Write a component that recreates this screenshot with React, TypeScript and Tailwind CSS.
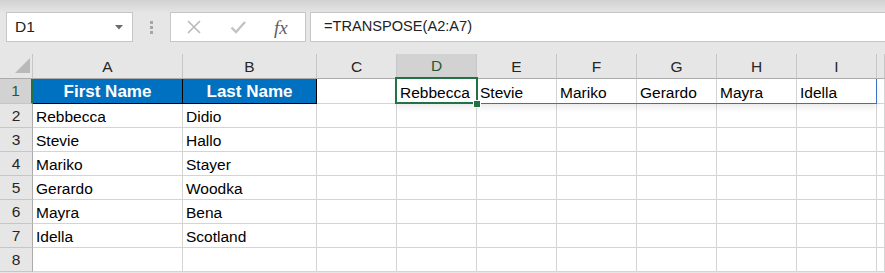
import React from "react";

const COLS = ["A", "B", "C", "D", "E", "F", "G", "H", "I", ""];

const ROWS: string[][] = [
	["First Name", "Last Name", "", "Rebbecca", "Stevie", "Mariko", "Gerardo", "Mayra", "Idella", ""],
	["Rebbecca", "Didio"],
	["Stevie", "Hallo"],
	["Mariko", "Stayer"],
	["Gerardo", "Woodka"],
	["Mayra", "Bena"],
	["Idella", "Scotland"],
	[],
];

const gridCols = "grid grid-cols-[33px_150px_134px_80px_80px_80px_80px_80px_80px_80px_1fr]";

const ColumnHeaders = () => (
	<div className={`${gridCols} h-[25px]`}>
		{/* corner with the select-all triangle */}
		<div className="relative border-r border-b border-r-[#c6c6c6] border-b-[#ababab] bg-[#e6e6e6]">
			<svg className="absolute left-[15px] top-[4px]" width="15" height="15" viewBox="0 0 15 15" aria-hidden="true">
				<polygon points="15,0 15,15 0,15" fill="#b9b9b9" />
			</svg>
		</div>
		{COLS.map((c, i) => {
			const selected = c === "D";
			return (
				<div
					key={i}
					className={
						selected
							? "flex items-center justify-center border-r border-r-[#c6c6c6] border-b-2 border-b-[#217346] bg-[#d2d2d2] text-[15.5px] text-[#1e5a36]"
							: "flex items-center justify-center border-r border-b border-r-[#c6c6c6] border-b-[#ababab] bg-[#e6e6e6] text-[15.5px] text-[#262626]"
					}
				>
					{c}
				</div>
			);
		})}
	</div>
);

const Row = ({ index, values }: { index: number; values: string[] }) => {
	const isHeaderRow = index === 1;
	return (
		<div className={`${gridCols} ${isHeaderRow ? "h-[25px]" : "h-[24px]"}`}>
			<div
				className={
					isHeaderRow
						? "flex items-center justify-center border-b border-b-[#c6c6c6] border-r-2 border-r-[#217346] bg-[#d2d2d2] text-[15.5px] text-[#1e5a36]"
						: "flex items-center justify-center border-b border-r border-b-[#c6c6c6] border-r-[#ababab] bg-[#e6e6e6] text-[15.5px] text-[#262626]"
				}
			>
				{index}
			</div>
			{COLS.map((_, ci) => {
				const v = values[ci] ?? "";
				if (isHeaderRow && ci < 2) {
					return (
						<div
							key={ci}
							className="flex items-end justify-center border-r border-b border-black bg-[#0070c0] pb-[1px] text-[17px] font-bold leading-[21px] text-white"
						>
							{v}
						</div>
					);
				}
				return (
					<div
						key={ci}
						className="flex items-end overflow-visible whitespace-nowrap border-r border-b border-[#d4d4d4] bg-white pl-[3px] text-[15.5px] leading-[20px] text-black"
					>
						{v}
					</div>
				);
			})}
		</div>
	);
};

const FormulaToolbar = () => (
	<div className="flex h-[30px] items-stretch">
		{/* name box */}
		<div className="ml-[6px] flex w-[127px] items-center justify-between border border-[#c6c6c6] bg-white pl-[8px] pr-[9px]">
			<span className="text-[15.5px] text-[#222]">D1</span>
			<svg width="8" height="5" viewBox="0 0 8 5" aria-hidden="true">
				<polygon points="0,0 8,0 4,4.5" fill="#6b6b6b" />
			</svg>
		</div>

		{/* grip dots */}
		<div className="flex w-[37px] flex-col items-center justify-center gap-[2px]">
			<span className="h-[3px] w-[3px] bg-[#a6a6a6]" />
			<span className="h-[3px] w-[3px] bg-[#a6a6a6]" />
			<span className="h-[3px] w-[3px] bg-[#a6a6a6]" />
		</div>

		{/* cancel / enter / fx */}
		<div className="flex w-[136px] items-center border border-[#c6c6c6] bg-white">
			<svg className="ml-[15px]" width="16" height="16" viewBox="0 0 16 16" aria-hidden="true">
				<path d="M2 2 L14 14 M14 2 L2 14" stroke="#b9b9b9" strokeWidth="1.6" fill="none" />
			</svg>
			<svg className="ml-[28px]" width="16" height="16" viewBox="0 0 16 16" aria-hidden="true">
				<path d="M1.5 8.5 L6 13 L15 3" stroke="#c2c2c2" strokeWidth="2.4" fill="none" />
			</svg>
			<span className="ml-[28px] font-['Liberation_Serif',serif] text-[19px] italic leading-none text-[#5e5e5e]">
				fx
			</span>
		</div>

		{/* formula bar */}
		<div className="ml-[4px] flex flex-1 items-center border-y border-l border-[#c6c6c6] bg-white pl-[13px]">
			<span className="text-[14.6px] text-[#222]">=TRANSPOSE(A2:A7)</span>
		</div>
	</div>
);

export default function App() {
	return (
		<div className="h-[273px] w-[885px] overflow-hidden bg-[#e6e6e6] font-['Liberation_Sans',Arial,sans-serif]">
			<div className="h-[12px] bg-gradient-to-b from-[#d2d2d2] to-[#e4e4e4]" />
			<FormulaToolbar />
			<div className="h-[12px]" />

			<div className="relative">
				<ColumnHeaders />
				{ROWS.map((r, i) => (
					<Row key={i} index={i + 1} values={r} />
				))}

				{/* spill range outline D1:I1 */}
				<div className="pointer-events-none absolute left-[396px] top-[25px] h-[25px] w-[481px] border-r border-b border-[#3b6fc6] shadow-[0_4px_6px_rgba(0,0,0,0.08)]" />

				{/* active cell D1 */}
				<div className="pointer-events-none absolute left-[395px] top-[23px] h-[27px] w-[83px] border-2 border-[#217346]" />
				<div className="pointer-events-none absolute left-[473px] top-[46px] h-[8px] w-[8px] border border-white bg-[#217346]" />
			</div>
		</div>
	);
}
